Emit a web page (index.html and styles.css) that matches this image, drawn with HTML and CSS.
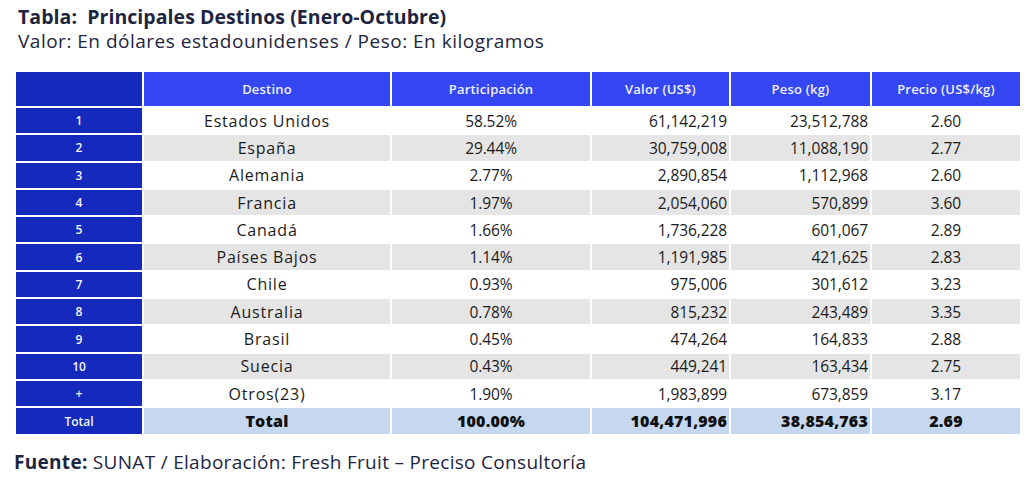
FILE: index.html
```html
<!DOCTYPE html>
<html lang="es">
<head>
<meta charset="utf-8">
<link rel="stylesheet" href="styles.css">
</head>
<body>
<header class="heading">
  <h1 class="title">Tabla:&nbsp; Principales Destinos (Enero-Octubre)</h1>
  <p class="subtitle">Valor: En dólares estadounidenses / Peso: En kilogramos</p>
</header>
<div class="grid">
  <div class="idx head"></div>
  <div class="th">Destino</div>
  <div class="th">Participación</div>
  <div class="th">Valor (US$)</div>
  <div class="th">Peso (kg)</div>
  <div class="th">Precio (US$/kg)</div>

  <div class="idx">1</div><div class="td c n">Estados Unidos</div><div class="td c">58.52%</div><div class="td r">61,142,219</div><div class="td r">23,512,788</div><div class="td c">2.60</div>
  <div class="idx">2</div><div class="td c n g">España</div><div class="td c g">29.44%</div><div class="td r g">30,759,008</div><div class="td r g">11,088,190</div><div class="td c g">2.77</div>
  <div class="idx">3</div><div class="td c n">Alemania</div><div class="td c">2.77%</div><div class="td r">2,890,854</div><div class="td r">1,112,968</div><div class="td c">2.60</div>
  <div class="idx">4</div><div class="td c n g">Francia</div><div class="td c g">1.97%</div><div class="td r g">2,054,060</div><div class="td r g">570,899</div><div class="td c g">3.60</div>
  <div class="idx">5</div><div class="td c n">Canadá</div><div class="td c">1.66%</div><div class="td r">1,736,228</div><div class="td r">601,067</div><div class="td c">2.89</div>
  <div class="idx">6</div><div class="td c n g">Países Bajos</div><div class="td c g">1.14%</div><div class="td r g">1,191,985</div><div class="td r g">421,625</div><div class="td c g">2.83</div>
  <div class="idx">7</div><div class="td c n">Chile</div><div class="td c">0.93%</div><div class="td r">975,006</div><div class="td r">301,612</div><div class="td c">3.23</div>
  <div class="idx">8</div><div class="td c n g">Australia</div><div class="td c g">0.78%</div><div class="td r g">815,232</div><div class="td r g">243,489</div><div class="td c g">3.35</div>
  <div class="idx">9</div><div class="td c n">Brasil</div><div class="td c">0.45%</div><div class="td r">474,264</div><div class="td r">164,833</div><div class="td c">2.88</div>
  <div class="idx">10</div><div class="td c n g">Suecia</div><div class="td c g">0.43%</div><div class="td r g">449,241</div><div class="td r g">163,434</div><div class="td c g">2.75</div>
  <div class="idx">+</div><div class="td c n">Otros(23)</div><div class="td c">1.90%</div><div class="td r">1,983,899</div><div class="td r">673,859</div><div class="td c">3.17</div>
  <div class="idx">Total</div><div class="td c t">Total</div><div class="td c t">100.00%</div><div class="td r t">104,471,996</div><div class="td r t">38,854,763</div><div class="td c t">2.69</div>
</div>
<p class="source"><b>Fuente:</b> SUNAT / Elaboración: Fresh Fruit – Preciso Consultoría</p>
</body>
</html>
```
FILE: styles.css
```css
html, body {
  margin: 0;
  padding: 0;
  background: #ffffff;
}
body {
  font-family: "Open Sans", "Liberation Sans", sans-serif;
  color: #1b1b1b;
  width: 1024px;
  height: 489px;
  overflow: hidden;
}
.heading {
  padding: 5px 0 0 18px;
  color: #1e2540;
}
.title {
  margin: 0;
  font-size: 19.5px;
  line-height: 24px;
  font-weight: 700;
  letter-spacing: 0.05px;
}
.subtitle {
  margin: 0;
  font-size: 19px;
  line-height: 24px;
  font-weight: 400;
  letter-spacing: 0.5px;
}
.grid {
  display: grid;
  grid-template-columns: 126px 246px 198px 137px 139px 148px;
  grid-template-rows: 34px repeat(11, 25.3px) 26px;
  gap: 2px;
  margin: 19px 0 0 16px;
  width: 1004px;
}
.idx {
  background: #1529bd;
  color: #f2f4ff;
  font-size: 12px;
  font-weight: 600;
  display: flex;
  align-items: center;
  justify-content: center;
}
.th {
  background: #3447f3;
  color: #eef0ff;
  font-size: 13px;
  font-weight: 600;
  letter-spacing: 0.2px;
  display: flex;
  align-items: center;
  justify-content: center;
}
.td {
  font-size: 15.5px;
  display: flex;
  align-items: center;
  letter-spacing: -0.1px;
}
.n {
  font-size: 16px;
  letter-spacing: 0.8px;
}
.c { justify-content: center; }
.r { justify-content: flex-end; padding-right: 2px; }
.g { background: #e5e5e5; }
.t { background: #c6d8f0; font-weight: 800; color: #0f0f0f; font-size: 16px; letter-spacing: 0.2px; }
.source {
  margin: 16px 0 0 14px;
  font-size: 19px;
  line-height: 24px;
  color: #1e2540;
  letter-spacing: 0.3px;
}
.source b { font-weight: 700; }
```
